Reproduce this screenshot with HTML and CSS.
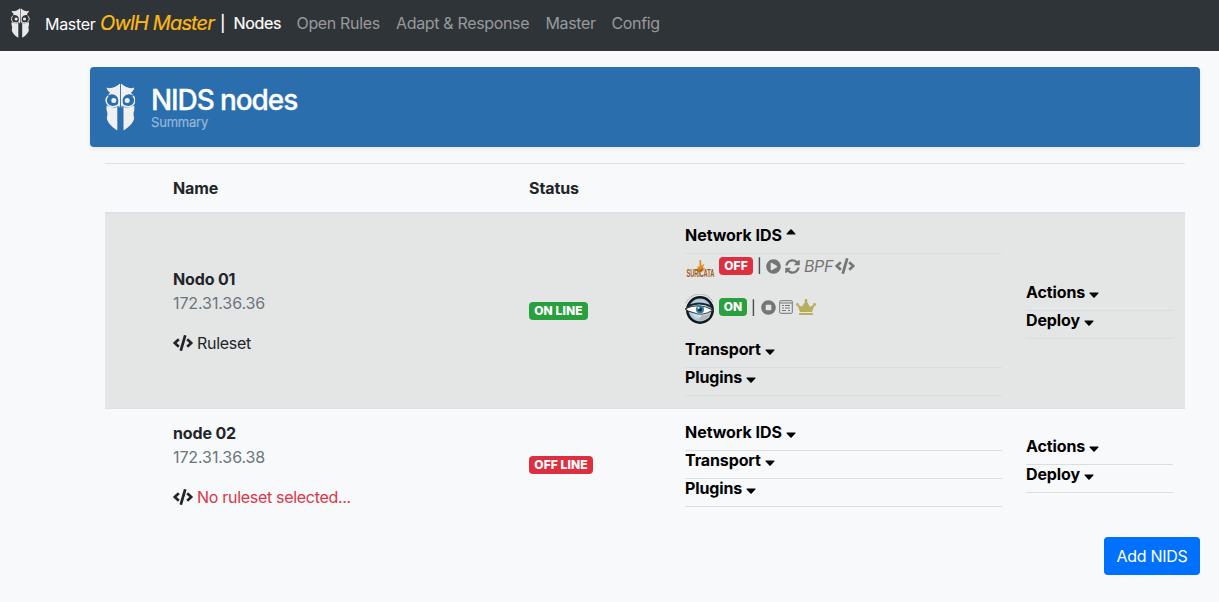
FILE: index.html
```html
<!DOCTYPE html>
<html lang="en">
<head>
<meta charset="utf-8">
<title>OwlH Master - NIDS nodes</title>
<link rel="stylesheet" href="styles.css">
</head>
<body>
<svg class="sprite" aria-hidden="true">
  <symbol id="owl" viewBox="0 0 30 48">
    <path d="M1.500 4.500C5 6 10 5 15.100 0.500V22L14 25L12.800 21C14.500 16 12 12 8 11.500C5.500 11 4 12 2.500 13L5 9.500C3.500 8.500 2 7 1.500 4.500ZM29.300 4.500C26 6 21 5 16 0.500V22L17 25L18.200 21C16.500 16 19 12 23 11.500C25.500 11 27 12 28.500 13L26 9.500C27.500 8.500 29 7 29.300 4.500Z"/>
    <path d="M3 13A6.300 6.300 0 0 0 9 23.500Q12 23.500 13.500 21.500M28 13A6.300 6.300 0 0 1 22 23.500Q19 23.500 17.500 21.500" fill="none" stroke="currentColor" stroke-width="1.500"/>
    <circle cx="8.800" cy="17.600" r="2.500"/><circle cx="22.200" cy="17.600" r="2.500"/>
    <path d="M1.500 22.500Q6 25.500 12.300 24V47.500C5 43 2 38 1.800 35C2.800 31 2.500 30 1.500 27ZM29.300 22.500Q25 25.500 18.500 24V47.500C26 43 29 38 29.200 35C28.200 31 28.500 30 29.300 27Z"/>
  </symbol>
  <symbol id="code" viewBox="0 0 640 512"><path d="M278.9 511.5l-61-17.7c-6.4-1.8-10-8.5-8.2-14.9L346.2 8.7c1.8-6.4 8.5-10 14.9-8.2l61 17.7c6.4 1.8 10 8.5 8.2 14.9L293.8 503.3c-1.9 6.4-8.5 10.1-14.9 8.2zm-114-112.2l43.5-46.4c4.6-4.9 4.3-12.7-.8-17.2L117 256l90.6-79.7c5.1-4.5 5.5-12.3.8-17.2l-43.5-46.4c-4.5-4.8-12.1-5.1-17-.5L3.8 247.2c-5.1 4.7-5.1 12.8 0 17.500l144.1 135.1c4.9 4.6 12.5 4.4 17-.5zm327.2.6l144.1-135.1c5.1-4.7 5.1-12.8 0-17.5L492.1 112.1c-4.8-4.5-12.4-4.3-17 .5L431.6 159c-4.6 4.9-4.3 12.7.8 17.2L523 256l-90.6 79.7c-5.1 4.5-5.5 12.3-.8 17.2l43.5 46.4c4.5 4.9 12.1 5.1 17 .6z"/></symbol>
  <symbol id="play" viewBox="0 0 512 512"><path d="M256 8C119 8 8 119 8 256s111 248 248 248 248-111 248-248S393 8 256 8zm115.7 272l-176 101c-15.8 8.8-35.7-2.5-35.7-21V152c0-18.4 19.8-29.8 35.7-21l176 107c16.4 9.2 16.4 32.9 0 42z"/></symbol>
  <symbol id="stop" viewBox="0 0 512 512"><path d="M256 8C119 8 8 119 8 256s111 248 248 248 248-111 248-248S393 8 256 8zm96 328c0 8.8-7.2 16-16 16H176c-8.8 0-16-7.2-16-16V176c0-8.8 7.2-16 16-16h160c8.8 0 16 7.2 16 16v160z"/></symbol>
  <symbol id="sync" viewBox="0 0 512 512"><path d="M370.72 133.28C339.458 104.008 298.888 87.962 255.848 88c-77.458.068-144.328 53.178-162.791 126.85-1.344 5.363-6.122 9.15-11.651 9.15H24.103c-7.498 0-13.194-6.807-11.807-14.176C33.933 94.924 134.813 8 256 8c66.448 0 126.791 26.136 171.315 68.685L463.03 40.97C478.149 25.851 504 36.559 504 57.941V192c0 13.255-10.745 24-24 24H345.941c-21.382 0-32.09-25.851-16.971-40.971l41.75-41.749zM32 296h134.059c21.382 0 32.09 25.851 16.971 40.971l-41.75 41.75c31.262 29.273 71.835 45.319 114.876 45.28 77.418-.07 144.315-53.144 162.787-126.849 1.344-5.363 6.122-9.15 11.651-9.15h57.304c7.498 0 13.194 6.807 11.807 14.176C478.067 417.076 377.187 504 256 504c-66.448 0-126.791-26.136-171.315-68.685L48.97 471.03C33.851 486.149 8 475.441 8 454.059V320c0-13.255 10.745-24 24-24z"/></symbol>
  <symbol id="crown" viewBox="0 0 640 512"><path d="M528 448H112c-8.8 0-16 7.2-16 16v32c0 8.8 7.2 16 16 16h416c8.8 0 16-7.2 16-16v-32c0-8.8-7.2-16-16-16zm64-320c-26.5 0-48 21.5-48 48 0 7.1 1.6 13.7 4.4 19.8L476 239.2c-15.4 9.2-35.3 4-44.2-11.6L350.3 85C361 76.2 368 63 368 48c0-26.5-21.5-48-48-48s-48 21.5-48 48c0 15 7 28.2 17.7 37l-81.5 142.6c-8.9 15.6-28.9 20.8-44.2 11.6l-72.3-43.4c2.7-6 4.4-12.7 4.4-19.8 0-26.5-21.5-48-48-48S0 149.5 0 176s21.5 48 48 48c2.6 0 5.2-.4 7.7-.8L128 416h384l72.3-192.8c2.5.4 5.1.8 7.7.8 26.5 0 48-21.5 48-48s-21.5-48-48-48z"/></symbol>
  <symbol id="caret" viewBox="0 0 10 6"><path d="M1 .5H9Q10 .5 9.300 1.400L5.600 5.400Q5 6 4.400 5.400L.7 1.400Q0 .5 1 .5Z"/></symbol>
</svg>

<nav class="navbar">
  <svg class="nav-owl"><use href="#owl"/></svg>
  <span class="brand">Master</span>
  <i class="product">OwlH Master</i>
  <span class="divider">|</span>
  <a class="link link-active link-nodes">Nodes</a>
  <a class="link link-rules">Open Rules</a>
  <a class="link link-adapt">Adapt &amp; Response</a>
  <a class="link link-master">Master</a>
  <a class="link">Config</a>
</nav>

<main class="page">
  <header class="banner">
    <svg class="banner-owl"><use href="#owl"/></svg>
    <div class="banner-text">
      <h1 class="banner-title">NIDS nodes</h1>
      <div class="banner-sub">Summary</div>
    </div>
  </header>

  <section class="table">
    <div class="row head">
      <div class="name">Name</div>
      <div class="status">Status</div>
    </div>

    <div class="row node node-first">
      <div class="name">
        <div class="node-name">Nodo 01</div>
        <div class="ip">172.31.36.36</div>
        <div class="ruleset"><svg class="code"><use href="#code"/></svg><span>Ruleset</span></div>
      </div>
      <div class="status"><span class="badge green badge-online">ON LINE</span></div>
      <div class="services">
        <div class="item item-ids">Network IDS<svg class="caret caret-up"><use href="#caret"/></svg></div>
        <div class="engines">
          <div class="engine suricata">
            <div class="suricata-logo">
              <svg class="flame" viewBox="0 0 14 12"><path fill="#d98b1c" d="M6.500 0H8L8.500 6L11.500 3.500L10 7.500L12.500 9L9 10V12H5.500L1 9.500L5 8.500L4 6L6.500 7Z"/></svg>
              <span class="suricata-word">SURICATA</span>
            </div>
            <span class="badge red badge-off">OFF</span>
            <span class="pipe">|</span>
            <svg class="icon"><use href="#play"/></svg>
            <svg class="icon"><use href="#sync"/></svg>
            <i class="bpf">BPF</i>
            <svg class="code"><use href="#code"/></svg>
          </div>
          <div class="engine zeek">
            <svg class="eye" viewBox="0 0 30 30">
              <defs><radialGradient id="sky"><stop offset=".3" stop-color="#eef8fc"/><stop offset="1" stop-color="#8fb6c6"/></radialGradient></defs>
              <path d="M1 9A15 15 0 0 1 28 8" fill="none" stroke="#888" stroke-width="1" stroke-dasharray="1 1"/>
              <circle cx="15" cy="16" r="12.700" fill="url(#sky)" stroke="#10181c" stroke-width="2.500"/>
              <path d="M2 13Q14 6 27 13" fill="none" stroke="#18262e" stroke-width="2"/>
              <path d="M0 15Q13 8 28 16Q17 23 8 18.500Q4 18 0 15Z" fill="#fff" stroke="#26363e" stroke-width="1"/>
              <circle cx="15" cy="15.500" r="4" fill="#347fa1"/><circle cx="15" cy="15.500" r="2" fill="#0b2634"/><circle cx="13.700" cy="14" r="1" fill="#e8faff"/>
              <path d="M17 21Q22 22 26 19L24 24Q19 27 13 26Z" fill="#b3b8ba"/>
            </svg>
            <span class="badge green badge-on">ON</span>
            <span class="pipe">|</span>
            <svg class="icon"><use href="#stop"/></svg>
            <svg class="list" viewBox="0 0 14 14"><rect x=".7" y=".7" width="12.600" height="12.600" rx="1"/><path d="M1 3H13M3 5.500H5M6 5.500H11M3 8H5M6 8H11M3 10.500H7M9 10.500H11"/></svg>
            <svg class="crown"><use href="#crown"/></svg>
          </div>
        </div>
        <div class="item">Transport<svg class="caret"><use href="#caret"/></svg></div>
        <div class="item">Plugins<svg class="caret"><use href="#caret"/></svg></div>
      </div>
      <div class="actions">
        <div class="item">Actions<svg class="caret"><use href="#caret"/></svg></div>
        <div class="item">Deploy<svg class="caret"><use href="#caret"/></svg></div>
      </div>
    </div>

    <div class="row node node-second">
      <div class="name">
        <div class="node-name">node 02</div>
        <div class="ip">172.31.36.38</div>
        <div class="ruleset"><svg class="code"><use href="#code"/></svg><span class="missing">No ruleset selected...</span></div>
      </div>
      <div class="status"><span class="badge red badge-offline">OFF LINE</span></div>
      <div class="services">
        <div class="item item-ids">Network IDS<svg class="caret"><use href="#caret"/></svg></div>
        <div class="item">Transport<svg class="caret"><use href="#caret"/></svg></div>
        <div class="item">Plugins<svg class="caret"><use href="#caret"/></svg></div>
      </div>
      <div class="actions">
        <div class="item">Actions<svg class="caret"><use href="#caret"/></svg></div>
        <div class="item">Deploy<svg class="caret"><use href="#caret"/></svg></div>
      </div>
    </div>
  </section>

  <div class="footer"><button class="add">Add NIDS</button></div>
</main>
</body>
</html>
```
FILE: styles.css
```css
* { box-sizing: border-box; }
body {
  margin: 0;
  background: #f7f9fb;
  color: #212529;
  font: 16px/24px Inter, "Liberation Sans", sans-serif;
  letter-spacing: -0.3px;
}
svg { fill: currentColor; flex: none; }
.sprite { display: none; }

.navbar {
  display: flex;
  align-items: center;
  height: 51px;
  padding: 0 10px 5px;
  background: #2f3438;
  color: #fff;
  white-space: nowrap;
}
.nav-owl { width: 20px; height: 30px; color: #e8e8e8; }
.brand { width: 55px; margin-left: 15px; padding-top: 2px; }
.product { width: 120px; color: #fdb913; font-size: 20px; letter-spacing: -0.85px; -webkit-text-stroke: 0.2px; }
.divider { width: 13.500px; font-weight: 500; }
.link { color: #979a9c; letter-spacing: -0.34px; }
.link-active { color: #fff; }
.link-nodes { width: 63px; -webkit-text-stroke: 0.2px; }
.link-rules { width: 99.500px; }
.link-adapt { width: 149.500px; }
.link-master { width: 66px; }

.page { padding: 16px 19px 0 90px; }
.banner {
  display: flex;
  align-items: center;
  gap: 16px;
  height: 80px;
  padding: 0 15px;
  border-radius: 4px;
  background: #2a6eae;
  box-shadow: 0 2px 4px rgba(0, 0, 0, .08);
  color: #fff;
}
.banner-owl { width: 30px; height: 48px; color: #f0f0f0; }
.banner-text { padding-bottom: 1px; }
.banner-title { margin: 0; font-size: 28px; line-height: 32px; font-weight: 500; letter-spacing: -1.1px; -webkit-text-stroke: 0.3px; }
.banner-sub { margin-top: -1px; color: #94b7d7; font-size: 13px; line-height: 14px; letter-spacing: -0.2px; -webkit-text-stroke: 0.2px; }

.table { margin: 16px 15px 0; border-top: 1px solid #dee2e6; }
.row {
  display: grid;
  grid-template-columns: 356px 156px 317px 171px;
  align-items: center;
  padding-left: 68px;
}
.actions { margin-left: 24px; }
.head { height: 50px; border-bottom: 2px solid #dee2e6; font-weight: 700; letter-spacing: -0.1px; }
.node-first { height: 194px; background: #e4e6e5; }
.node-second { height: 113px; border-top: 1px solid #dee2e6; }
.node-name { font-weight: 700; letter-spacing: -0.15px; }
.ip { color: #6c757d; letter-spacing: -0.1px; }
.ruleset { display: flex; align-items: center; gap: 4px; margin-top: 16px; }
.missing { color: #dc3545; letter-spacing: -0.3px; }
.code { width: 20px; height: 16px; }

.status { display: flex; }
.badge {
  display: flex;
  align-items: center;
  justify-content: center;
  height: 18px;
  border-radius: 4px;
  color: #fff;
  font-size: 12px;
  font-weight: 800;
  line-height: 12px;
  letter-spacing: 0.1px;
}
.green { background: #28a03e; }
.red { background: #dc3040; }
.badge-online { width: 59px; }
.badge-offline { width: 64px; }
.badge-on { width: 28px; }
.badge-off { width: 34px; }

.item {
  display: flex;
  height: 28px;
  border-bottom: 1px solid #dadee0;
  color: #000;
  font-weight: 700;
  line-height: 18px;
  letter-spacing: -0.12px;
}
.item-ids { letter-spacing: -0.05px; }
.caret { width: 10px; height: 6px; margin: 9px 0 0 4px; }
.caret-up { margin-top: 3px; transform: rotate(180deg); }
.engines { height: 86px; color: #757575; }
.engine { display: flex; align-items: center; }
.suricata { height: 24px; }
.suricata-logo {
  display: flex;
  flex-direction: column;
  align-items: center;
  width: 30px;
  height: 20px;
  margin: 8px 4px 0 0;
}
.flame { width: 14px; height: 12px; margin-bottom: -3px; }
.suricata-word {
  color: #9c5a20;
  font: 700 10px/10px "Liberation Sans", sans-serif;
  letter-spacing: -0.2px;
  transform: scaleX(.57);
}
.pipe { width: 12px; padding-left: 4px; margin-right: 1px; color: #212529; font-size: 14px; }
.icon { width: 15px; height: 15px; margin-right: 4px; }
.bpf { width: 31px; letter-spacing: -0.4px; }
.zeek { height: 30px; margin-top: 15px; }
.zeek .icon { margin: 0 3px 2px 1px; }
.eye { width: 30px; height: 30px; margin: 2px 4px 0 0; }
.zeek .badge { margin-bottom: 3px; }
.list { width: 14px; height: 14px; margin: 0 3px 2px 0; fill: none; stroke: currentColor; }
.crown { width: 20px; height: 16px; margin-bottom: 2px; color: #b9ad5e; }

.footer { display: flex; justify-content: flex-end; margin-top: 16px; }
.add {
  width: 96px;
  height: 38px;
  padding: 0;
  border: 0;
  border-radius: 4px;
  background: #0070ff;
  color: #fff;
  font: inherit;
  letter-spacing: -0.3px;
}
```
